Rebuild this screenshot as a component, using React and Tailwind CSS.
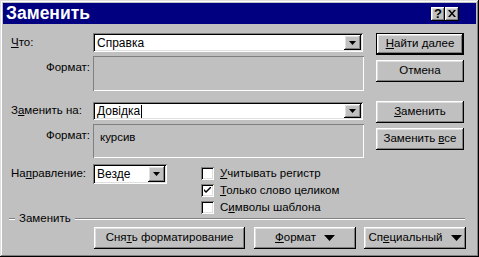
const raised = "shadow-[inset_-1px_-1px_#000,inset_1px_1px_#fff,inset_-2px_-2px_#808080,inset_2px_2px_#dfdfdf]";
const sunken = "shadow-[inset_1px_1px_#808080,inset_-1px_-1px_#fff,inset_2px_2px_#000,inset_-2px_-2px_#dfdfdf]";
const etched = "shadow-[inset_1px_1px_#808080,inset_-1px_-1px_#fff]";

function Arrow() {
  return (
    <svg width="7" height="4" viewBox="0 0 7 4">
      <polygon points="0,0 7,0 3.5,4" fill="#000" />
    </svg>
  );
}

function BigArrow() {
  return (
    <svg width="11" height="6" viewBox="0 0 11 6">
      <polygon points="0,0 11,0 5.5,6" fill="#000" />
    </svg>
  );
}

function Combo({ value, caret, height }) {
  return (
    <div className={`w-[270px] bg-white p-[2px] flex ${sunken} ${height}`}>
      <div className="flex-1 flex items-center pl-[2px] text-[12px] leading-none">
        {value}
        {caret ? <span className="ml-[1px] w-[1px] h-[13px] bg-black" /> : null}
      </div>
      <div className={`w-[17px] h-full bg-[#c0c0c0] flex items-center justify-center ${raised}`}>
        <Arrow />
      </div>
    </div>
  );
}

function Button({ children, className }) {
  return (
    <div className={`h-[22px] bg-[#c0c0c0] flex items-center justify-center ${raised} ${className || ""}`}>
      {children}
    </div>
  );
}

function Check({ checked, children }) {
  return (
    <div className="h-[13px] flex items-center gap-[6px]">
      <div className={`w-[13px] h-[13px] bg-white flex items-center justify-center ${sunken}`}>
        {checked ? (
          <svg width="7" height="7" viewBox="0 0 7 7">
            <path d="M0 2 L0 4 L2 6 L7 1 L7 -1 L2 4 Z" fill="#000" />
          </svg>
        ) : null}
      </div>
      <span>{children}</span>
    </div>
  );
}

export default function App() {
  return (
    <div className="w-[479px] h-[257px] bg-[#c0c0c0] p-[3px] flex flex-col text-black text-[11.5px] leading-none font-['Liberation_Sans',Arial,sans-serif] shadow-[inset_-1px_-1px_#000,inset_1px_1px_#dfdfdf,inset_-2px_-2px_#808080,inset_2px_2px_#fff]">
      <div className="h-[21px] bg-[#000080] flex items-center pl-[3px] pr-[17px]">
        <span className="flex-1 text-white text-[17.5px] font-bold">Заменить</span>
        <div className={`w-[14px] h-[14px] bg-[#c0c0c0] flex items-center justify-center text-[13px] font-bold ${raised}`}>?</div>
        <div className={`w-[14px] h-[14px] bg-[#c0c0c0] flex items-center justify-center ${raised}`}>
          <svg width="8" height="7" viewBox="0 0 8 7">
            <path d="M0 0 L2 0 L4 2.4 L6 0 L8 0 L5 3.5 L8 7 L6 7 L4 4.6 L2 7 L0 7 L3 3.5 Z" fill="#000" />
          </svg>
        </div>
      </div>

      <div className="flex pl-[8px]">
        <div className="w-[353px] flex flex-col">
          <div className="mt-[9px] flex items-center">
            <span className="w-[82px]"><u>Ч</u>то:</span>
            <Combo value="Справка" height="h-[19px]" />
          </div>
          <div className="mt-[4px] flex">
            <span className="w-[82px] pr-[3px] pt-[6px] text-right">Формат:</span>
            <div className={`w-[271px] h-[35px] ${etched}`} />
          </div>
          <div className="mt-[11px] flex items-center">
            <span className="w-[82px]">З<u>а</u>менить на:</span>
            <Combo value="Довідка" caret height="h-[18px]" />
          </div>
          <div className="mt-[4px] flex">
            <span className="w-[82px] pr-[3px] pt-[6px] text-right">Формат:</span>
            <div className={`w-[271px] h-[34px] pl-[7px] pt-[8px] ${etched}`}>курсив</div>
          </div>
          <div className="mt-[6px] flex items-start">
            <span className="w-[82px] h-[20px] flex items-center">На<u>п</u>равление:</span>
            <div className={`w-[74px] h-[20px] bg-white p-[2px] flex ${sunken}`}>
              <div className="flex-1 flex items-center pl-[2px] text-[12px]">Везде</div>
              <div className={`w-[17px] h-full bg-[#c0c0c0] flex items-center justify-center ${raised}`}>
                <Arrow />
              </div>
            </div>
            <div className="ml-[34px] mt-[3px] flex flex-col gap-[4px]">
              <Check><u>У</u>читывать регистр</Check>
              <Check checked><u>Т</u>олько слово целиком</Check>
              <Check>С<u>и</u>мволы шаблона</Check>
            </div>
          </div>
        </div>

        <div className="ml-[12px] w-[88px] flex flex-col">
          <div className="mt-[9px] h-[22px] border border-black">
            <div className={`h-full bg-[#c0c0c0] flex items-center justify-center ${raised}`}>
              <span><u>Н</u>айти далее</span>
            </div>
          </div>
          <Button className="mt-[5px]">Отмена</Button>
          <Button className="mt-[19px]"><span><u>З</u>аменить</span></Button>
          <Button className="mt-[5px]"><span>Заменить <u>в</u>се</span></Button>
        </div>
      </div>

      <div className="mt-[-1px] h-[12px] flex items-center ml-[6px] mr-[11px]">
        <div className="w-[6px] h-[2px] border-t border-b border-t-[#808080] border-b-white" />
        <span className="px-[4px]">Заменить</span>
        <div className="flex-1 h-[2px] border-t border-b border-t-[#808080] border-b-white" />
      </div>

      <div className="mt-[2px] flex pl-[91px]">
        <Button className="w-[151px] h-[21px]"><span>Сня<u>т</u>ь форматирование</span></Button>
        <Button className="ml-[9px] w-[102px] h-[21px] gap-[8px]">
          <span><u>Ф</u>ормат</span>
          <BigArrow />
        </Button>
        <Button className="ml-[8px] w-[102px] h-[21px] gap-[8px]">
          <span>Сп<u>е</u>циальный</span>
          <BigArrow />
        </Button>
      </div>
    </div>
  );
}
